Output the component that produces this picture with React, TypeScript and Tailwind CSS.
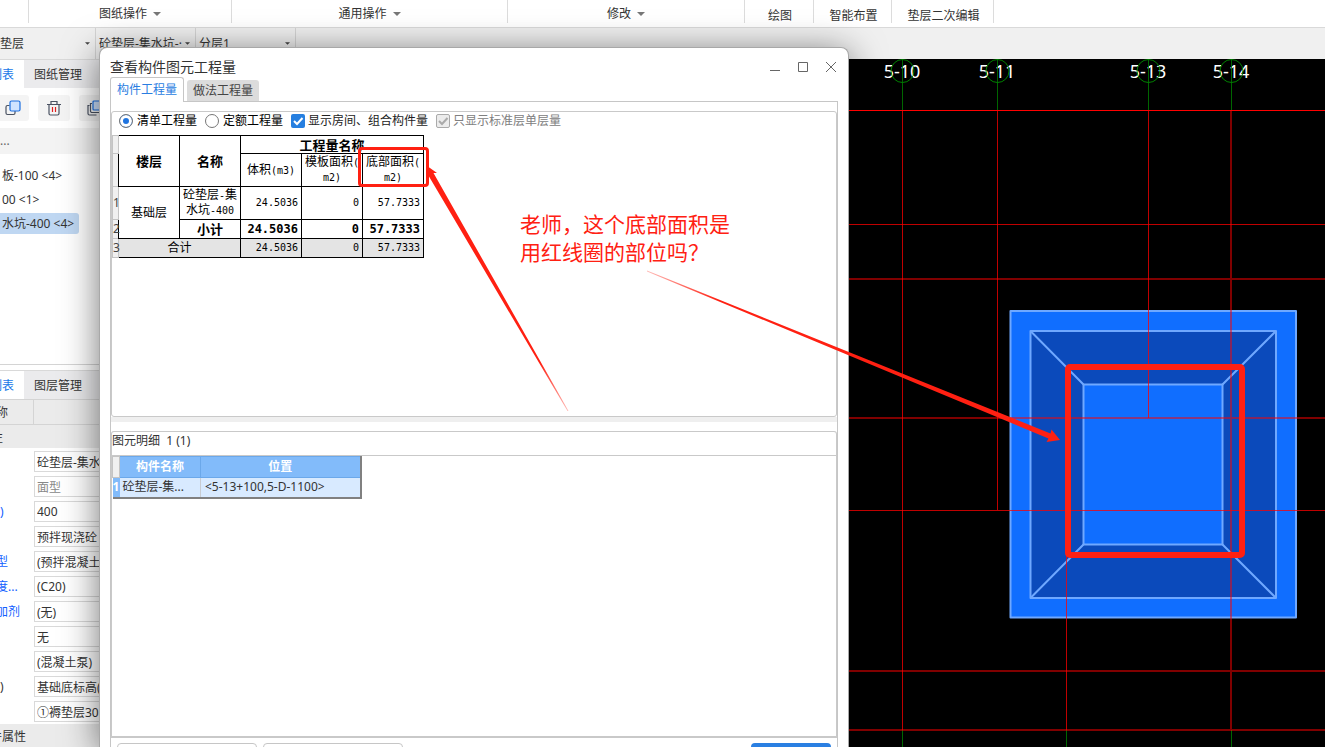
import type { ReactNode } from 'react';
import clsx from 'clsx';

const toolGroups = [
  { label: '图纸操作', width: 'w-[203px]' },
  { label: '通用操作', width: 'w-[276px]' },
  { label: '修改', width: 'w-[237px]' },
];

const toolTabs = [
  { label: '绘图', width: 'w-[69px]' },
  { label: '智能布置', width: 'w-[78px]' },
  { label: '垫层二次编辑', width: 'w-[102px]' },
];

const filters = [
  { name: '构件类型', value: '垫层', className: 'w-[95px] pl-0' },
  { name: '构件', value: '砼垫层-集水坑-·', className: 'w-[99px] pl-[3px]' },
  { name: '分层', value: '分层1', className: 'w-[99px] pl-[3px]' },
];

const components = [
  { label: '板-100 <4>', active: false },
  { label: '00 <1>', active: false },
  { label: '水坑-400 <4>', active: true },
];

const properties = [
  { label: '', value: '砼垫层-集水' },
  { label: '', value: '面型', muted: true },
  { label: ')', value: '400', link: true },
  { label: '', value: '预拌现浇砼' },
  { label: '型', value: '(预拌混凝土', link: true },
  { label: '度...', value: '(C20)', link: true },
  { label: '加剂', value: '(无)', link: true },
  { label: '', value: '无' },
  { label: '', value: '(混凝土泵)' },
  { label: ')', value: '基础底标高(' },
  { label: '', value: '①褥垫层30' },
];

const axes = [
  { label: '5-10', x: 53 },
  { label: '5-11', x: 148 },
  { label: '5-13', x: 299 },
  { label: '5-14', x: 382 },
];

function Caret({ className }: { className?: string }) {
  return (
    <svg viewBox="0 0 8 4" className={className} aria-hidden="true">
      <path d="M0 0h8L4 4z" fill="currentColor" />
    </svg>
  );
}

function Toolbar() {
  return (
    <header className="flex h-7 shrink-0 border-b border-[#d9d9d9] bg-white">
      <div className="h-[23px] w-[29px] shrink-0 border-r border-[#dcdcdc]" />
      {toolGroups.map((group) => (
        <button
          key={group.label}
          className={clsx(
            'flex h-[23px] shrink-0 items-center justify-center gap-[6px] border-r border-[#dcdcdc] pt-[5px]',
            group.width,
          )}
        >
          {group.label}
          <Caret className="h-1 w-2 text-[#777]" />
        </button>
      ))}
      {toolTabs.map((tab) => (
        <button
          key={tab.label}
          className={clsx('h-[23px] shrink-0 border-r border-[#dcdcdc] pl-[2px] pt-2 leading-[15px]', tab.width)}
        >
          {tab.label}
        </button>
      ))}
    </header>
  );
}

function FilterBar() {
  return (
    <div className="flex h-[31px] shrink-0 bg-[#f0f0f0]">
      {filters.map((filter) => (
        <div key={filter.name} className="relative flex shrink-0 border-r border-[#d4d4d4]">
          <select
            aria-label={filter.name}
            className={clsx('appearance-none bg-transparent pr-[13px] outline-none', filter.className)}
          >
            <option>{filter.value}</option>
          </select>
          <Caret className="pointer-events-none absolute right-[5px] top-[14px] h-[3px] w-[5px] text-[#444]" />
        </div>
      ))}
    </div>
  );
}

function SideTabs({ other }: { other: string }) {
  return (
    <div className="flex h-[29px] shrink-0 border-t border-[#d9d9d9] bg-[#ebebed]">
      <button className="flex w-6 shrink-0 items-center justify-end overflow-hidden whitespace-nowrap bg-white pr-[10px] pt-px text-[#1677e8]">
        列表
      </button>
      <button className="whitespace-nowrap pl-[10px] pt-px">{other}</button>
    </div>
  );
}

function IconButton({ label, children }: { label: string; children: ReactNode }) {
  return (
    <button aria-label={label} className="flex h-[26px] w-8 shrink-0 items-center justify-center rounded-[3px] bg-[#f4f4f4]">
      <svg viewBox="0 0 16 16" className="size-4" fill="none" stroke="#4a5262" strokeWidth="1.2">
        {children}
      </svg>
    </button>
  );
}

function Sidebar() {
  return (
    <aside className="flex w-[99px] shrink-0 flex-col overflow-hidden bg-white">
      <SideTabs other="图纸管理" />
      <div className="-ml-[3px] flex h-10 shrink-0 items-center gap-[9px]">
        <IconButton label="复制">
          <path d="M4.500 5.500H2.500a1.500 1.500 0 0 0-1.500 1.500v6a1.500 1.500 0 0 0 1.500 1.500h6a1.500 1.500 0 0 0 1.500-1.500V11" />
          <rect x="5" y="1" width="10" height="10" rx="1.500" fill="#cfe3ff" stroke="#1c6fe0" />
        </IconButton>
        <IconButton label="删除">
          <path d="M1 4.500h14M5 4.500V1.500h6v3M3 4.500v9A1.500 1.500 0 0 0 4.500 15h7a1.500 1.500 0 0 0 1.500-1.500v-9" />
          <path d="M6.500 7v5M9.500 7v5" stroke="#e02020" />
        </IconButton>
        <IconButton label="层间复制">
          <path d="M2.500 5.500H1v8A1.500 1.500 0 0 0 2.500 15h7M5 3.500H3.500v7.500A1.500 1.500 0 0 0 5 12.500h7" />
          <rect x="6" y="1" width="10" height="9" rx="1" fill="#cfe3ff" stroke="#1c6fe0" />
        </IconButton>
      </div>
      <div className="h-[26px] shrink-0 bg-[#f3f3f3] leading-[26px] text-[#666]">...</div>
      <ul className="h-[211px] shrink-0 border-b border-[#d4d4d4] pt-[9px]">
        {components.map((item) => (
          <li key={item.label} className="flex h-6 items-center">
            <a
              href="#"
              className={clsx(
                'whitespace-nowrap rounded-r-[3px] pl-[2px] pr-[5px] leading-[21px]',
                item.active && 'bg-[#bfd7f2]',
              )}
            >
              {item.label}
            </a>
          </li>
        ))}
      </ul>
      <div className="h-[5px] shrink-0" />
      <SideTabs other="图层管理" />
      <div className="flex h-[26px] shrink-0 items-center border-y border-[#d4d4d4] bg-[#ebebeb]">
        <span className="h-full w-[34px] shrink-0 border-r border-[#d4d4d4] leading-[26px]">
          <span className="-ml-1">称</span>
        </span>
      </div>
      <div className="h-[23px] shrink-0 bg-[#ebebeb] leading-[26px]">
        <span className="-ml-[9px]">性</span>
      </div>
      <div className="shrink-0 pt-px">
        {properties.map((row, i) => (
          <label key={i} className="flex h-[25px] items-center">
            <span className={clsx('w-[34px] shrink-0 whitespace-nowrap', row.link && 'text-[#1260ff]')}>
              <span className={row.label.length > 0 && row.label !== ')' ? '-ml-1' : ''}>{row.label}</span>
            </span>
            <input
              aria-label={row.label || row.value}
              defaultValue={row.value}
              className={clsx(
                'h-[21px] w-[180px] shrink-0 border border-[#d9d9d9] bg-white pl-[2px] outline-none',
                row.muted && 'text-[#888]',
              )}
            />
          </label>
        ))}
      </div>
      <div className="flex-1 bg-[#ebebeb] leading-[26px]">
        <span className="-ml-[10px]">件属性</span>
      </div>
    </aside>
  );
}

function Radio({ label, checked }: { label: string; checked?: boolean }) {
  return (
    <label className="flex items-center gap-1 text-black">
      <input
        type="radio"
        name="quantity"
        defaultChecked={checked}
        className="size-[14px] appearance-none rounded-full border border-[#777] bg-white checked:bg-[#1f74e0] checked:shadow-[inset_0_0_0_3px_#fff]"
      />
      {label}
    </label>
  );
}

function Checkbox({ label, disabled }: { label: string; disabled?: boolean }) {
  return (
    <label className={clsx('flex items-center gap-[3px]', disabled ? 'text-[#808080]' : 'text-[#222]')}>
      <span className="relative flex">
        <input
          type="checkbox"
          defaultChecked
          disabled={disabled}
          className="size-[14px] appearance-none rounded-[2px] bg-[#267fe0] disabled:border disabled:border-[#aaa] disabled:bg-[#ececec]"
        />
        <svg
          viewBox="0 0 14 14"
          className="pointer-events-none absolute inset-0"
          fill="none"
          stroke={disabled ? '#aaa' : '#fff'}
          strokeWidth="2"
        >
          <path d="M3 7l3 3 5.500-6" />
        </svg>
      </span>
      {label}
    </label>
  );
}

// half-width characters inside the quantity grid
function Mono({ children }: { children: ReactNode }) {
  return <span className="font-['DejaVu_Sans_Mono',monospace] text-[10px]">{children}</span>;
}

function QuantityTable() {
  const gutter = 'border border-[#c4c4c4] bg-[#f0f0f0] font-normal text-[#444]';
  const cell = 'border border-black';
  const head = 'border border-black text-[13px]';
  const num = "border border-black pr-[3px] text-right font-['DejaVu_Sans_Mono',monospace] text-[10px]";
  const sum = "border border-black pr-[3px] text-right font-['DejaVu_Sans_Mono',monospace] text-[12px]";

  return (
    <table className="w-[312px] table-fixed border-collapse text-center leading-[14px] text-black">
      <colgroup>
        <col className="w-[6px]" />
        <col className="w-[61px]" />
        <col className="w-[61px]" />
        <col className="w-[61px]" />
        <col className="w-[61px]" />
        <col className="w-[61px]" />
      </colgroup>
      <thead>
        <tr className="h-[18px]">
          <td className={gutter} />
          <th rowSpan={2} className={head}>楼层</th>
          <th rowSpan={2} className={head}>名称</th>
          <th colSpan={3} className={head}>工程量名称</th>
        </tr>
        <tr className="h-[33px]">
          <td className={gutter} />
          <th className={clsx(cell, 'font-normal')}>体积<Mono>(m3)</Mono></th>
          <th className={clsx(cell, 'whitespace-nowrap font-normal')}>模板面积<Mono>(</Mono><br /><Mono>m2)</Mono></th>
          <th className={clsx(cell, 'whitespace-nowrap font-normal')}>底部面积<Mono>(</Mono><br /><Mono>m2)</Mono></th>
        </tr>
      </thead>
      <tbody>
        <tr className="h-[33px]">
          <td className={gutter}>1</td>
          <td rowSpan={2} className={cell}>基础层</td>
          <td className={cell}>砼垫层<Mono>-</Mono>集<br />水坑<Mono>-400</Mono></td>
          <td className={num}>24.5036</td>
          <td className={num}>0</td>
          <td className={num}>57.7333</td>
        </tr>
        <tr className="h-[19px] font-bold">
          <td className={gutter}>2</td>
          <td className={head}>小计</td>
          <td className={sum}>24.5036</td>
          <td className={sum}>0</td>
          <td className={sum}>57.7333</td>
        </tr>
        <tr className="h-[19px] bg-[#e4e4e4]">
          <td className={gutter}>3</td>
          <td colSpan={2} className={cell}>合计</td>
          <td className={num}>24.5036</td>
          <td className={num}>0</td>
          <td className={num}>57.7333</td>
        </tr>
      </tbody>
    </table>
  );
}

function DetailTable() {
  return (
    <table className="w-[249px] table-fixed border-collapse border-b-2 border-r-2 border-[#808080] leading-4">
      <colgroup>
        <col className="w-[7px]" />
        <col className="w-[81px]" />
        <col className="w-[160px]" />
      </colgroup>
      <thead>
        <tr className="h-[21px] text-white">
          <td className="border border-[#c4c4c4] bg-[#f0f0f0]" />
          <th className="border border-[#6ba8ea] bg-[#82bbfa]">构件名称</th>
          <th className="border border-[#6ba8ea] bg-[#82bbfa]">位置</th>
        </tr>
      </thead>
      <tbody>
        <tr className="h-5 bg-[#d8eaff]">
          <td className="bg-[#82bbfa] font-bold text-white">1</td>
          <td className="border-r border-[#c8ccd2] pl-[3px]">砼垫层-集...</td>
          <td className="pl-1">&lt;5-13+100,5-D-1100&gt;</td>
        </tr>
      </tbody>
    </table>
  );
}

function WindowButtons() {
  return (
    <div className="flex gap-[18px] pr-3 text-[#666]">
      <button aria-label="最小化">
        <svg viewBox="0 0 10 10" className="size-[10px]" stroke="currentColor"><path d="M0 8.500h10" /></svg>
      </button>
      <button aria-label="最大化">
        <svg viewBox="0 0 10 10" className="size-[10px]" stroke="currentColor" fill="none"><path d="M.5.5h9v9h-9z" /></svg>
      </button>
      <button aria-label="关闭">
        <svg viewBox="0 0 10 10" className="size-[10px] overflow-visible" stroke="currentColor"><path d="M0 0l10 10M10 0L0 10" /></svg>
      </button>
    </div>
  );
}

function Notes() {
  return (
    <>
      <div className="pointer-events-none absolute left-[258px] top-[99px] h-10 w-[71px] rounded-[4px] border-3 border-[#ff2012]" />
      <svg viewBox="0 0 480 370" className="pointer-events-none absolute left-0 top-0 h-[370px] w-[480px]">
        <defs>
          <linearGradient id="noteFade" gradientUnits="userSpaceOnUse" x1="468" y1="363" x2="440" y2="314">
            <stop offset="0" stopColor="#ff2012" stopOpacity="0.3" />
            <stop offset="1" stopColor="#ff2012" />
          </linearGradient>
        </defs>
        <path d="M326.500 117.500L337 125l-3.500 0L468.500 363h-1L329 128.500 326 131.500z" fill="url(#noteFade)" />
      </svg>
      <p className="absolute left-[420px] top-[162px] text-[21px] leading-7 text-[#ff2012]">
        老师，这个底部面积是
        <br />
        用红线圈的部位吗？
      </p>
    </>
  );
}

function QuantityDialog() {
  return (
    <section
      role="dialog"
      aria-label="查看构件图元工程量"
      className="relative z-10 -mt-3 flex min-w-0 flex-1 flex-col rounded-t-[8px] border border-b-0 border-[#a8a8a8] bg-white shadow-[0_6px_36px_rgba(0,0,0,0.55)]"
    >
      <div className="flex h-[29px] shrink-0 items-center justify-between pl-[10px] pt-2">
        <h1 className="text-[14px] leading-5">查看构件图元工程量</h1>
        <WindowButtons />
      </div>
      <div className="relative z-10 flex h-[25px] shrink-0 items-end gap-[3px] pl-[10px]">
        <button className="h-[25px] w-[74px] rounded-t-[3px] border border-b-0 border-[#c6c6c6] bg-white text-[#2a7de1]">
          构件工程量
        </button>
        <button className="mb-px h-[21px] w-[72px] rounded-t-[3px] bg-[#dcdcdc] text-[#444]">做法工程量</button>
      </div>
      <div className="-mt-px mx-[10px] flex min-h-0 flex-1 flex-col border border-b-0 border-[#c6c6c6] pt-[9px]">
        <div className="flex h-[306px] shrink-0 flex-col rounded-[3px] border border-[#c9c9c9]">
          <div className="mb-[6px] flex h-[17px] items-center gap-2 whitespace-nowrap pl-[7px]">
            <Radio label="清单工程量" checked />
            <Radio label="定额工程量" />
            <Checkbox label="显示房间、组合构件量" />
            <Checkbox label="只显示标准层单层量" disabled />
          </div>
          <QuantityTable />
        </div>
        <div className="mb-[9px] h-[5px] shrink-0 bg-[#efefef]" />
        <div className="flex min-h-0 flex-1 flex-col rounded-t-[3px] border border-b-2 border-[#c9c9c9]">
          <h2 className="h-6 shrink-0 whitespace-pre border-b border-[#c9c9c9] leading-[18px]">图元明细  1 (1)</h2>
          <DetailTable />
        </div>
        <div className="flex h-[9px] shrink-0 gap-[6px] overflow-hidden px-[6px] pt-[5px]">
          <button aria-label="查询" className="h-7 w-[140px] shrink-0 rounded-[4px] border border-[#c6c6c6]" />
          <button aria-label="导出" className="h-7 w-[140px] shrink-0 rounded-[4px] border border-[#c6c6c6]" />
          <button aria-label="退出" className="ml-auto h-7 w-20 shrink-0 rounded-[4px] bg-[#2a7fe2]" />
        </div>
      </div>
      <Notes />
    </section>
  );
}

function DrawingCanvas() {
  return (
    <main className="relative z-20 w-[476px] shrink-0 bg-black">
      <svg viewBox="0 0 476 688" className="h-[688px] w-[476px] overflow-visible">
        <defs>
          <linearGradient id="arrowFade" gradientUnits="userSpaceOnUse" x1="-202" y1="212" x2="-130" y2="241">
            <stop offset="0" stopColor="#ff2012" stopOpacity="0.3" />
            <stop offset="1" stopColor="#ff2012" />
          </linearGradient>
        </defs>

        <g fontFamily="'Noto Sans', sans-serif" fontSize="18" fill="#fff" textAnchor="middle">
          {axes.map((axis) => (
            <text key={axis.label} x={axis.x} y="19">{axis.label}</text>
          ))}
        </g>
        <g fill="none" stroke="#008000">
          {axes.map((axis) => (
            <g key={axis.label}>
              <circle cx={axis.x + 0.5} cy="12" r="11.500" />
              <path d={`M${axis.x + 0.5} 0V51`} strokeOpacity="0.8" />
            </g>
          ))}
          <path d="M53.500 671v17M217.500 671v17M382.500 671v17" strokeOpacity="0.8" />
        </g>

        {/* sump: outer slab, sloped sides, bottom */}
        <g stroke="#6fa8ff" strokeWidth="2" strokeLinejoin="round">
          <rect x="161.500" y="252" width="285.500" height="306.500" fill="#106eff" />
          <rect x="181.500" y="272" width="245.500" height="267" fill="#0b4abb" />
          <path d="M181.500 272l53 53.500M427 272l-53.500 53.500M181.500 539l53-53.500M427 539l-53.500-53.500" />
          <rect x="234.500" y="325.500" width="139" height="160" fill="#106eff" />
        </g>

        <g stroke="#ff0000">
          <path d="M0 51.500h476" />
          <path
            d="M0 165.500h476M0 451.500h476M53.500 51v620M148.500 51v400M299.500 51v308M217.500 451v220"
            strokeOpacity="0.75"
          />
          <path d="M0 220h476M0 359h476M0 612h476M0 671h476M382 51v620" strokeWidth="2" strokeOpacity="0.5" />
        </g>

        <rect x="219" y="308" width="174" height="188" rx="2" fill="none" stroke="#ff2012" strokeWidth="6" />
        <path d="M-202 211.500v1L199.500 379.500 197.500 383 211 381 202.500 370.500 201.500 374.500z" fill="url(#arrowFade)" />
      </svg>
    </main>
  );
}

export default function App() {
  return (
    <div className="flex h-screen flex-col overflow-hidden bg-white font-['Noto_Sans','Noto_Sans_CJK_SC',sans-serif] text-[12px] leading-4 text-[#333]">
      <Toolbar />
      <FilterBar />
      <div className="flex min-h-0 flex-1">
        <Sidebar />
        <QuantityDialog />
        <DrawingCanvas />
      </div>
    </div>
  );
}
